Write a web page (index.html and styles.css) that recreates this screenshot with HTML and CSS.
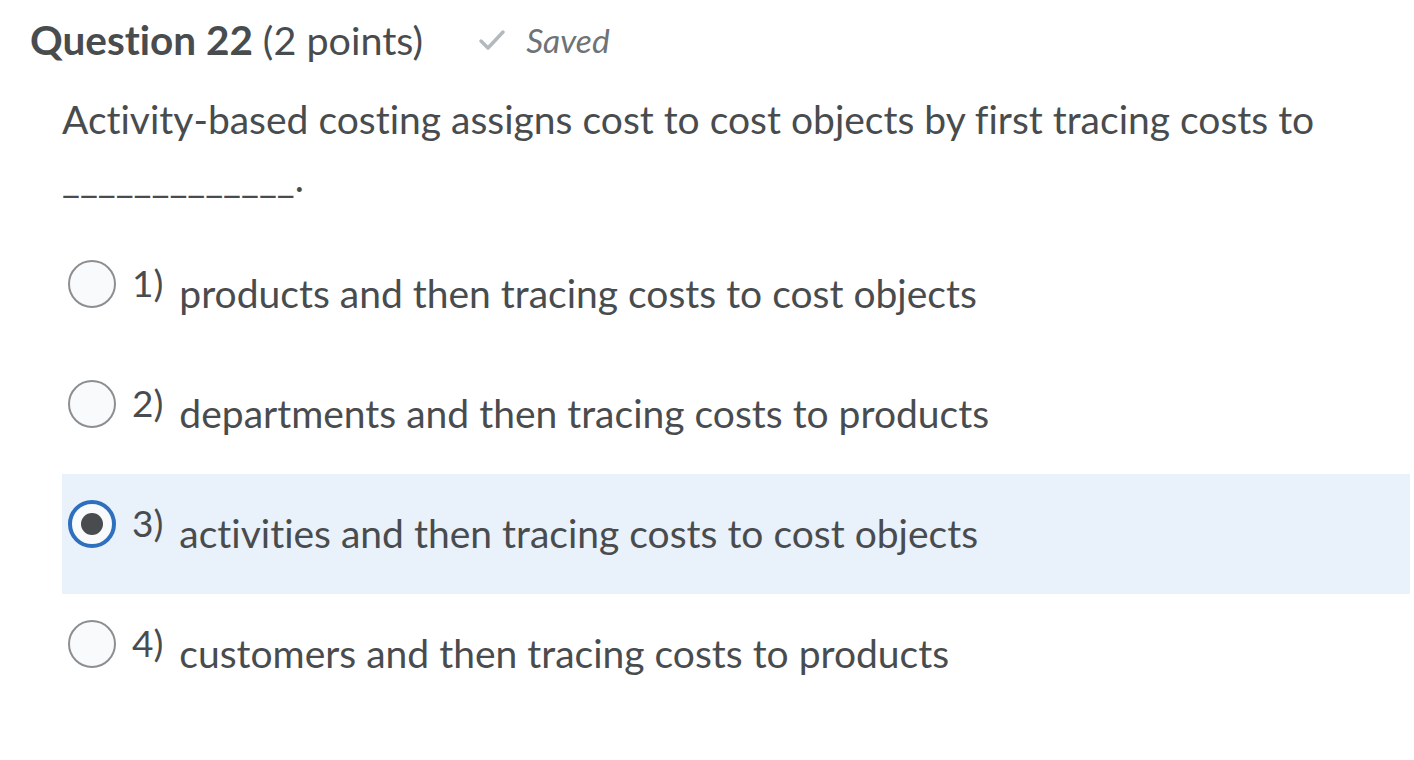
FILE: index.html
```html
<!DOCTYPE html>
<html>
<head>
<meta charset="utf-8">
<link rel="stylesheet" href="styles.css">
</head>
<body>
<div class="page">
  <div class="header">
    <h2 class="title"><span class="qnum">Question 22</span> <span class="pts">(2 points)</span></h2>
    <div class="saved">
      <svg class="check" width="28" height="24" viewBox="0 0 28 24"><path d="M3 13 L10 20 L25 4" fill="none" stroke="#b3b9bd" stroke-width="3.5" stroke-linecap="round" stroke-linejoin="round"/></svg>
      <span class="saved-text">Saved</span>
    </div>
  </div>
  <div class="question">
    <p class="stem">Activity-based costing assigns cost to cost objects by first tracing costs to<br><span class="blank">_____________.</span></p>
  </div>
  <div class="options">
    <div class="option">
      <span class="radio"></span>
      <span class="num">1)</span>
      <span class="label">products and then tracing costs to cost objects</span>
    </div>
    <div class="option">
      <span class="radio"></span>
      <span class="num">2)</span>
      <span class="label">departments and then tracing costs to products</span>
    </div>
    <div class="option selected">
      <span class="radio checked"></span>
      <span class="num">3)</span>
      <span class="label">activities and then tracing costs to cost objects</span>
    </div>
    <div class="option">
      <span class="radio"></span>
      <span class="num">4)</span>
      <span class="label">customers and then tracing costs to products</span>
    </div>
  </div>
</div>
</body>
</html>
```
FILE: styles.css
```css
html, body {
  margin: 0;
  padding: 0;
  background: #ffffff;
}
body {
  font-family: Lato, "Open Sans", sans-serif;
  color: #494c4e;
  font-variant-ligatures: none;
  font-feature-settings: "liga" 0, "clig" 0;
}
.page {
  padding: 12px 4px 0 30px;
}
.header {
  display: flex;
  align-items: center;
  height: 56px;
}
.title {
  margin: 0;
  font-size: 40.5px;
  font-weight: 700;
  line-height: 56px;
}
.pts {
  font-weight: 400;
  font-size: 39.5px;
}
.saved {
  display: flex;
  align-items: center;
  margin-left: 55px;
  gap: 20px;
}
.saved-text {
  font-style: italic;
  font-size: 33.5px;
  color: #6e7376;
}
.question {
  padding-left: 32px;
}
.stem {
  margin: 22px 0 0 0;
  font-size: 39px;
  line-height: 58px;
}
.options {
  margin-top: 28px;
  padding-left: 32px;
}
.option {
  display: flex;
  align-items: flex-start;
  height: 120px;
  padding-left: 6px;
}
.option.selected {
  background: #e9f1fb;
}
.radio {
  box-sizing: border-box;
  width: 48px;
  height: 48px;
  border-radius: 50%;
  border: 2px solid #8c8f92;
  background: #f9fafc;
  margin-top: 26px;
  flex: none;
  display: flex;
  align-items: center;
  justify-content: center;
}
.radio.checked {
  border: 4px solid #2e6fbe;
  background: #f9fafc;
}
.radio.checked::after {
  content: "";
  width: 22px;
  height: 22px;
  border-radius: 50%;
  background: #494c4e;
}
.num {
  font-size: 37px;
  line-height: 1.2;
  margin-left: 16px;
  margin-top: 27px;
}
.label {
  font-size: 39px;
  line-height: 1.2;
  margin-left: 16px;
  margin-top: 36px;
}
```
